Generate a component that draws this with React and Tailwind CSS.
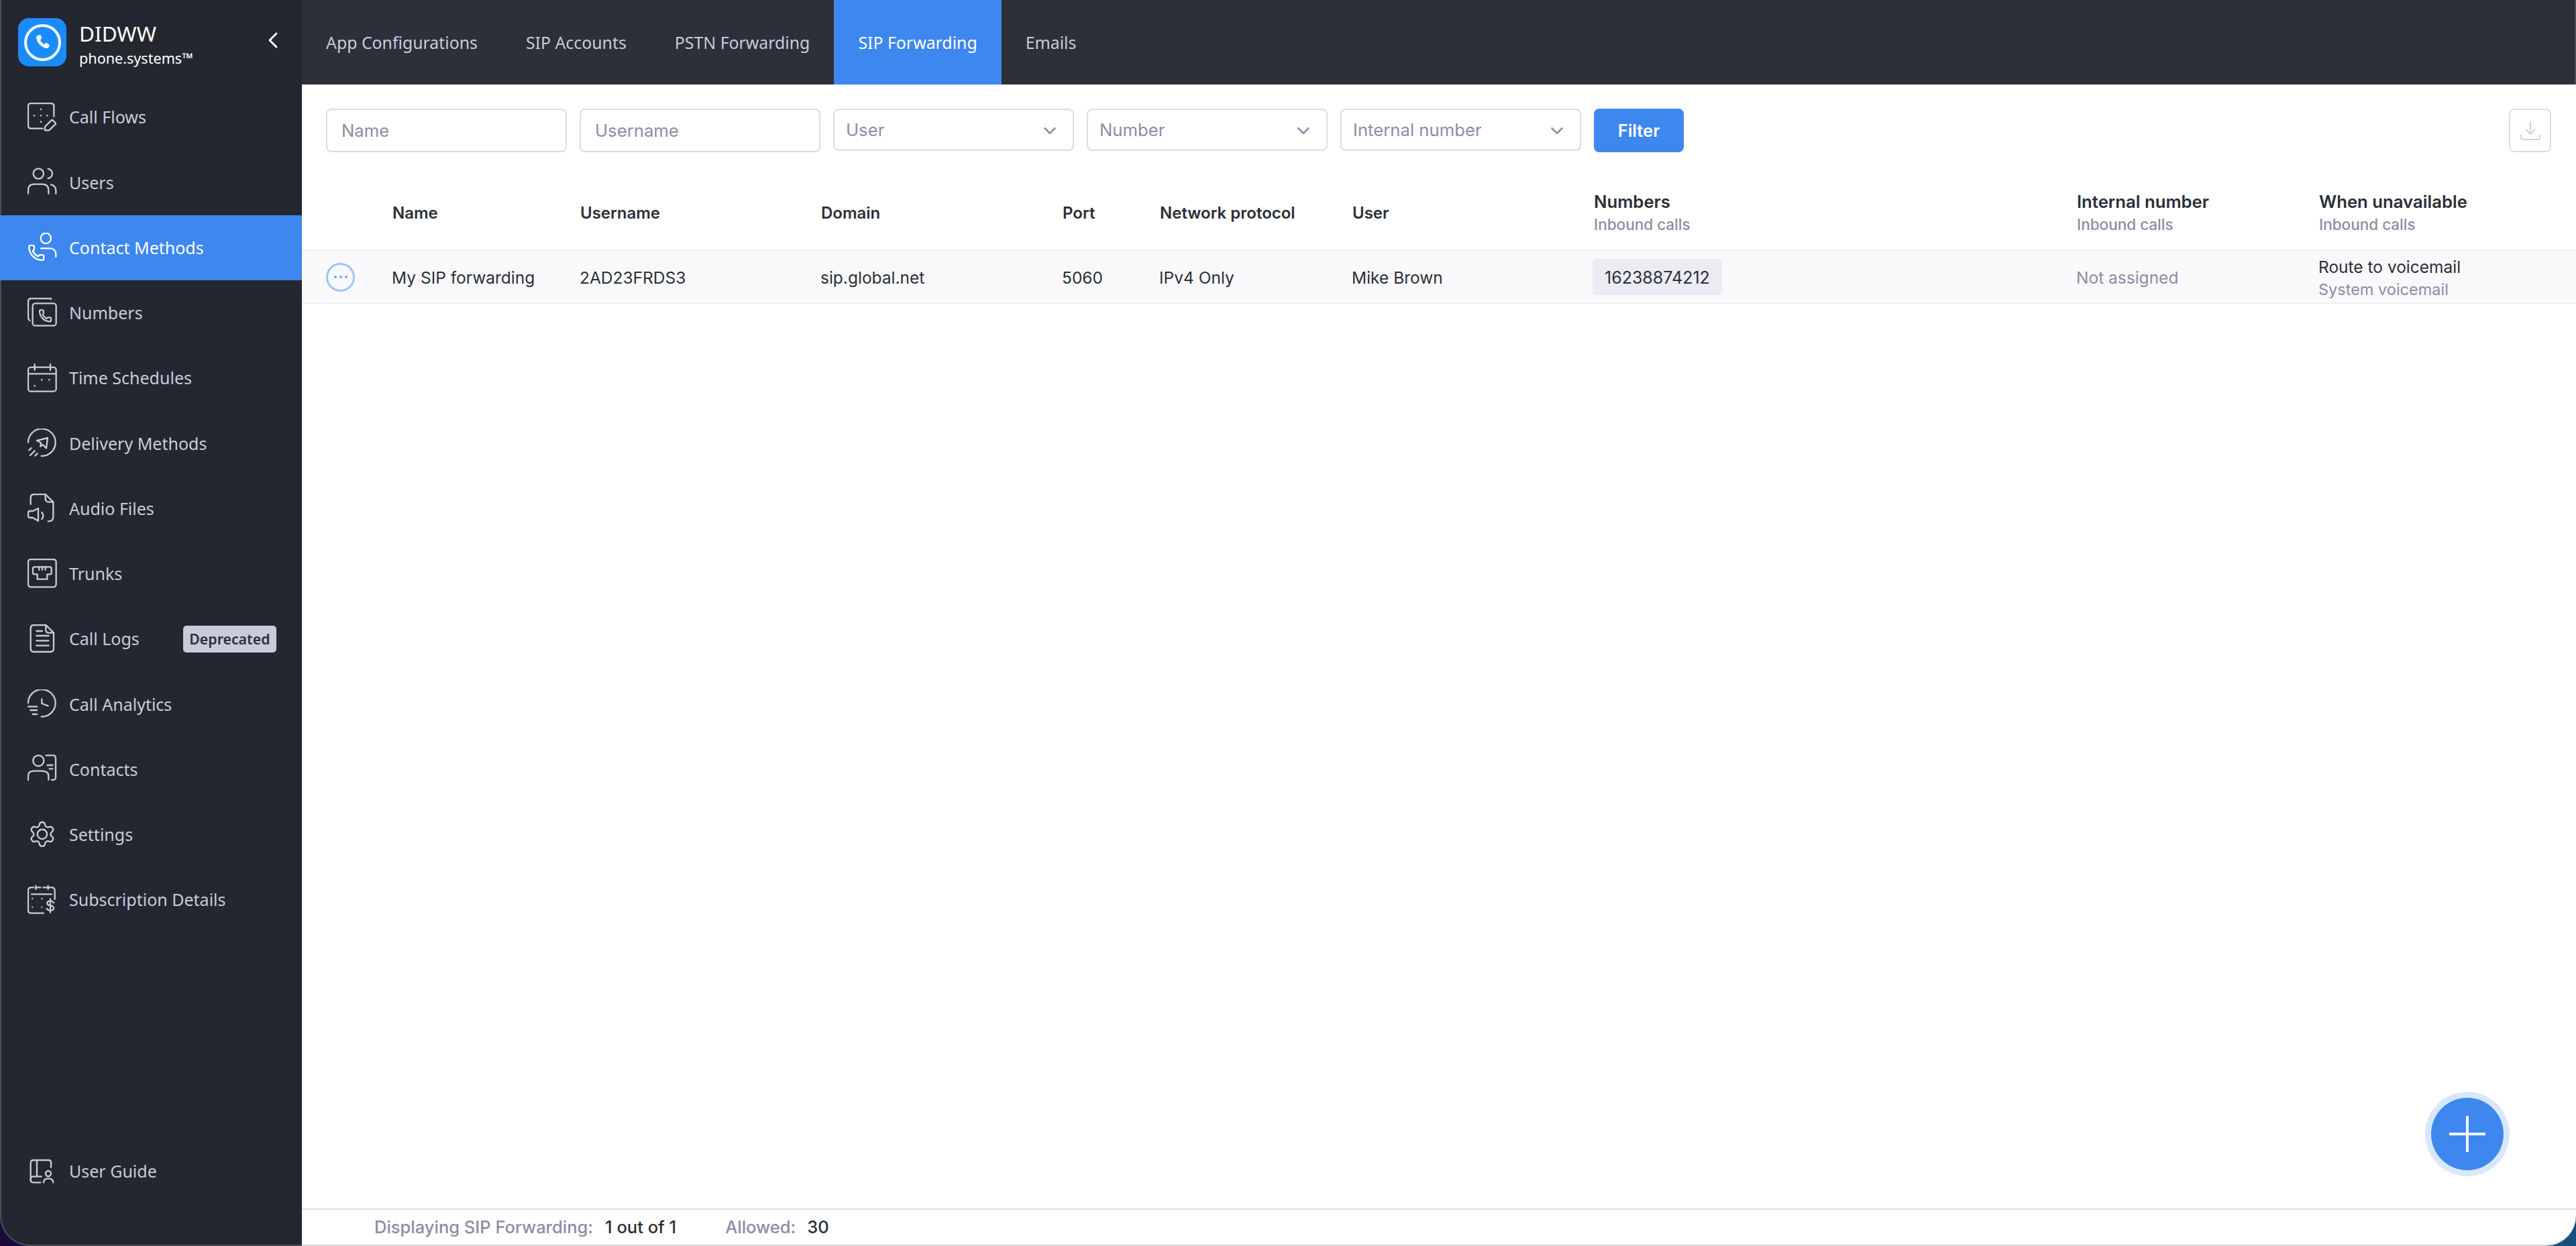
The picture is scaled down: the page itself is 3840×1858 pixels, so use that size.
import { ChevronDown, ChevronLeft } from 'lucide-react'

const phonePath =
  'M13.832 16.568a1 1 0 0 0 1.213-.303l.355-.465A2 2 0 0 1 17 15h3a2 2 0 0 1 2 2v3a2 2 0 0 1-2 2A18 18 0 0 1 2 4a2 2 0 0 1 2-2h3a2 2 0 0 1 2 2v3a2 2 0 0 1-.8 1.6l-.468.351a1 1 0 0 0-.292 1.233 14 14 0 0 0 6.392 6.384'
const gearPath =
  'M9.671 4.136a2.34 2.34 0 0 1 4.659 0 2.34 2.34 0 0 0 3.319 1.915 2.34 2.34 0 0 1 2.33 4.033 2.34 2.34 0 0 0 0 3.831 2.34 2.34 0 0 1-2.33 4.033 2.34 2.34 0 0 0-3.319 1.915 2.34 2.34 0 0 1-4.659 0 2.34 2.34 0 0 0-3.32-1.915 2.34 2.34 0 0 1-2.33-4.033 2.34 2.34 0 0 0 0-3.831A2.34 2.34 0 0 1 6.35 6.051a2.34 2.34 0 0 0 3.319-1.915'

function Glyph({ children }) {
  return (
    <svg
      viewBox="0 0 132 132"
      fill="none"
      stroke="currentColor"
      strokeWidth="7"
      strokeLinecap="round"
      strokeLinejoin="round"
      className="h-[44px] w-[44px] shrink-0"
    >
      {children}
    </svg>
  )
}

const icons = {
  flows: (
    <>
      <path d="M118 62V16Q118 3 104 3H16Q3 3 3 16V102Q3 116 16 116H68" />
      <path d="M60 30v.1M30 58v.1M60 58v.1M88 58v.1M60 86v.1" strokeWidth="8" />
      <path d="M78 108 106 80Q110 76 114 80L124 90Q128 94 124 98L96 124H78Z" />
    </>
  ),
  users: (
    <>
      <circle cx="49" cy="27" r="23" />
      <path d="M92 5A24 22 0 0 1 92 48" />
      <path d="M3 116V100Q3 74 30 74H66Q94 74 94 100V116" />
      <path d="M105 76Q127 80 127 102V116" />
    </>
  ),
  contact: (
    <>
      <circle cx="82" cy="25" r="23" />
      <path d="M60 70H100Q127 70 127 98V108" />
      <g transform="translate(0 50) scale(3.3)">
        <path d={phonePath} strokeWidth="2.1" />
      </g>
    </>
  ),
  numbers: (
    <>
      <path d="M106 5Q103 3 96 3H18Q3 3 3 18V86Q3 98 10 102" />
      <rect x="23" y="25" width="105" height="100" rx="12" />
      <g transform="translate(49 50) scale(2.55)">
        <path d={phonePath} strokeWidth="2.6" />
      </g>
    </>
  ),
  schedules: (
    <>
      <rect x="3" y="17" width="125" height="108" rx="12" />
      <path d="M3 46H128M32 3V30M102 3V30" />
      <path d="M64 73v.1M97 73v.1M32 100v.1" strokeWidth="8" />
    </>
  ),
  delivery: (
    <>
      <path d="M3 62A61 61 0 1 1 62 123" />
      <path d="M42 54 90 42 84 88 68 72 58 80 60 64Z" />
      <path d="M7 97 17 87M12 120 32 100M34 122 44 112" />
    </>
  ),
  audio: (
    <>
      <path d="M14 48V20Q14 3 32 3H80L115 38V104Q115 124 92 124" />
      <path d="M80 3V22Q80 38 96 38H115" />
      <path d="M3 86Q3 78 11 78H24L48 66V122L24 108H11Q3 108 3 100Z" />
      <path d="M64 84Q76 98 64 114" />
    </>
  ),
  trunks: (
    <>
      <rect x="3" y="3" width="125" height="124" rx="12" />
      <path d="M32 37H100Q107 37 107 44V62Q107 70 100 70H88V92H44V70H32Q24 70 24 62V44Q24 37 32 37Z" />
      <path d="M52 37V50M66 37V50M80 37V50" />
    </>
  ),
  logs: (
    <>
      <path d="M82 3H28Q14 3 14 18V108Q14 123 28 123H103Q117 123 117 108V38Z" />
      <path d="M82 3V24Q82 38 96 38H117" />
      <path d="M40 30H66M40 51H95M40 73H95M40 95H95" />
    </>
  ),
  analytics: (
    <>
      <path d="M3 61A61 61 0 1 1 62 122" />
      <path d="M64 43V63L92 74" />
      <path d="M3 77H42M13 93H42M23 111H42" />
    </>
  ),
  contacts: (
    <>
      <circle cx="49" cy="28" r="24" />
      <path d="M3 114V96Q3 74 30 74H62Q94 74 94 96V114" />
      <path d="M82 4H114Q126 4 126 16V102Q126 114 114 114H108" />
      <path d="M88 48H112M98 64H112" />
    </>
  ),
  settings: (
    <g transform="translate(1 1) scale(5.4)">
      <path d={gearPath} strokeWidth="1.3" />
      <circle cx="12" cy="12" r="4" strokeWidth="1.3" />
    </g>
  ),
  subscription: (
    <>
      <path d="M28 10H16Q3 10 3 24V112Q3 125 16 125H72" />
      <path d="M96 10H108Q122 10 122 24V62" />
      <path d="M18 40H108M37 2V18M37 10H58M92 2V18M70 10H92" />
      <path d="M22 60v.1M64 60v.1M22 98v.1M64 98v.1" strokeWidth="7" />
      <path d="M117 78Q110 69 101 70Q88 72 88 81Q88 89 102 91Q117 93 117 103Q117 113 102 113Q92 113 86 105M102 62V122" strokeWidth="7" />
    </>
  ),
  guide: (
    <>
      <path d="M105 50V28Q105 18 95 18H27Q14 18 14 30V106Q14 118 27 118H58" />
      <path d="M42 18V91M14 104Q14 91 27 91H62" />
      <circle cx="93" cy="78" r="12" />
      <path d="M72 118Q72 100 93 100Q115 100 115 118" />
    </>
  ),
}

const nav = [
  ['Call Flows', 'flows'],
  ['Users', 'users'],
  ['Contact Methods', 'contact', true],
  ['Numbers', 'numbers'],
  ['Time Schedules', 'schedules'],
  ['Delivery Methods', 'delivery'],
  ['Audio Files', 'audio'],
  ['Trunks', 'trunks'],
  ['Call Logs', 'logs'],
  ['Call Analytics', 'analytics'],
  ['Contacts', 'contacts'],
  ['Settings', 'settings'],
  ['Subscription Details', 'subscription'],
]

const tabs = ['App Configurations', 'SIP Accounts', 'PSTN Forwarding', 'SIP Forwarding', 'Emails']

function NavItem({ label, icon, active }) {
  return (
    <a
      className={`flex h-[97.25px] items-center gap-[18px] pr-[38px] text-[25px] ${
        active ? '-ml-[2px] bg-[#3d87ef] pl-[41px] text-white' : 'pl-[39px] text-[#c9cbdc]'
      }`}
    >
      <Glyph>{icons[icon]}</Glyph>
      <span className="pt-[1px]">{label}</span>
      {label === 'Call Logs' && (
        <span className="ml-auto flex h-[40px] items-center rounded-[5px] bg-[#c9cbdc] px-[9.5px] text-[21.3px] font-semibold text-[#2b2f38]">
          Deprecated
        </span>
      )}
    </a>
  )
}

function Sidebar() {
  return (
    <aside className="flex w-[450px] shrink-0 flex-col rounded-bl-[45px] border-b-2 border-l-2 border-[#4b4e57] bg-[#24272f] font-['Noto_Sans',sans-serif]">
      <div className="flex h-[126px] items-center pl-[25px]">
        <div className="grid h-[72px] w-[72px] place-items-center rounded-[16px] bg-[#1a8cfa]">
          <div className="grid h-[55px] w-[55px] place-items-center rounded-full border-[4px] border-white">
            <svg viewBox="0 0 24 24" className="h-[28px] w-[28px] fill-white">
              <path d="M6.6 3.2 8.8 2.6c.6-.1 1.100.2 1.300.7l1.200 3.200c.2.500 0 1-.4 1.300L9.300 9c.9 2.200 2.800 4.300 5.400 5.700l1.500-1.500c.4-.4 1-.5 1.400-.2l3 1.700c.5.3.7.9.5 1.400l-.9 2.400c-.3.800-1 1.300-1.900 1.200C10.900 18.900 4.600 12.400 4.500 5.500c0-1.100.9-2 2.100-2.300Z" />
            </svg>
          </div>
        </div>
        <div className="ml-[19px] pt-[5px] text-white">
          <div className="text-[31.5px] leading-[40px]">DIDWW</div>
          <div className="mt-[2px] text-[21.6px] leading-[30px]">phone.systems™</div>
        </div>
        <ChevronLeft className="mr-[23px] ml-auto h-[40px] w-[40px] -translate-y-[3px] text-white" strokeWidth={1.75} />
      </div>
      <nav className="flex flex-1 flex-col">
        {nav.map(([label, icon, active]) => (
          <NavItem key={label} label={label} icon={icon} active={active} />
        ))}
        <div className="mt-auto mb-[61px]">
          <NavItem label="User Guide" icon="guide" />
        </div>
      </nav>
    </aside>
  )
}

function TextFilter({ label }) {
  return (
    <div className="flex h-[65px] w-[359px] items-center rounded-[8px] border-2 border-[#dcdce9] px-[21px] pt-[1px] text-[25.7px] text-[#8b8da5]">
      {label}
    </div>
  )
}

function SelectFilter({ label }) {
  return (
    <div className="flex h-[63px] w-[359px] items-center justify-between rounded-[8px] border-2 border-[#dcdce9] pt-[2px] pr-[19px] pl-[17px] text-[25.7px] text-[#8b8da5]">
      {label}
      <ChevronDown className="h-[30px] w-[30px]" strokeWidth={2} />
    </div>
  )
}

const columns = 'grid grid-cols-[99px_280px_359px_360px_145px_287px_360px_720px_361px_1fr]'

function HeaderCell({ title, sub }) {
  return (
    <div className={sub ? 'pb-[3px]' : ''}>
      <div className={`leading-[34px] font-semibold text-[#2b2f38] ${sub ? 'text-[25.7px]' : 'text-[24px]'}`}>{title}</div>
      {sub && <div className="mt-[4px] text-[22.5px] leading-[26px] font-medium text-[#8b8da5]">{sub}</div>}
    </div>
  )
}

function App() {
  return (
    <div className="h-[1858px] w-[3840px] overflow-hidden bg-linear-to-r from-[#1a0a3a] to-[#14507f]">
      <div className="flex h-full">
        <Sidebar />
        <main className="relative flex min-w-0 flex-1 flex-col overflow-hidden rounded-br-[45px] border-b-2 border-[#d8d8de] bg-white font-['Inter',sans-serif]">
          <div className="flex h-[126px] shrink-0 border-r-2 border-[#4b4e57] bg-[#2c3039] pt-[1px] font-['Noto_Sans',sans-serif] text-[24.85px] text-[#c9cbdc]">
            {tabs.map((tab) => (
              <a
                key={tab}
                className={`flex items-center px-[36px] ${tab === 'SIP Forwarding' ? '-mt-[1px] bg-[#3d87ef] pt-[1px] text-white' : ''}`}
              >
                {tab}
              </a>
            ))}
          </div>

          <div className="flex items-start gap-[19px] pt-[36px] pr-[37px] pl-[36px]">
            <TextFilter label="Name" />
            <TextFilter label="Username" />
            <SelectFilter label="User" />
            <SelectFilter label="Number" />
            <SelectFilter label="Internal number" />
            <button className="h-[65px] w-[134px] rounded-[8px] bg-[#3d87ef] pt-[1px] text-[25.5px] font-semibold text-white">
              Filter
            </button>
            <button className="ml-auto grid h-[65px] w-[63px] place-items-center rounded-[8px] border-2 border-[#dcdce9] text-[#cfd1e2]">
              <svg viewBox="0 0 30 30" fill="none" stroke="currentColor" strokeWidth="2" className="h-[30px] w-[30px]">
                <path d="M15 1V20M8 13 15 20 22 13" />
                <path d="M1 21V25Q1 28 4 28H26Q29 28 29 25V21" />
              </svg>
            </button>
          </div>

          <div className={`${columns} mt-[36px] h-[111px] items-center border-b-2 border-[#ebebf3] pl-[36px]`}>
            <span />
            <HeaderCell title="Name" />
            <HeaderCell title="Username" />
            <HeaderCell title="Domain" />
            <HeaderCell title="Port" />
            <HeaderCell title="Network protocol" />
            <HeaderCell title="User" />
            <HeaderCell title="Numbers" sub="Inbound calls" />
            <HeaderCell title="Internal number" sub="Inbound calls" />
            <HeaderCell title="When unavailable" sub="Inbound calls" />
          </div>

          <div className={`${columns} h-[79px] items-center border-b border-[#e6e6ee] bg-[#f9f9fb] pl-[35px] text-[24.5px] text-[#2b2f38]`}>
            <span className="ml-[1px] grid h-[43px] w-[43px] place-items-center rounded-full border-[3px] border-[#9cc4f8]">
              <span className="flex gap-[4px]">
                <i className="h-[4px] w-[4px] rounded-full bg-[#6fa8f5]" />
                <i className="h-[4px] w-[4px] rounded-full bg-[#6fa8f5]" />
                <i className="h-[4px] w-[4px] rounded-full bg-[#6fa8f5]" />
              </span>
            </span>
            <span className="pt-[3px]">My SIP forwarding</span>
            <span className="pt-[3px]">2AD23FRDS3</span>
            <span className="pt-[3px]">sip.global.net</span>
            <span className="pt-[3px]">5060</span>
            <span className="pt-[3px]">IPv4 Only</span>
            <span className="pt-[3px]">Mike Brown</span>
            <span>
              <span className="-ml-[1px] inline-flex h-[54px] items-center rounded-[6px] bg-[#ebebf3] px-[18px] pt-[3px] text-[25px]">16238874212</span>
            </span>
            <span className="pt-[3px] text-[#8b8da5]">Not assigned</span>
            <span className="pt-[3px]">
              <div className="leading-[34px]">Route to voicemail</div>
              <div className="text-[23.5px] leading-[34px] text-[#8b8da5]">System voicemail</div>
            </span>
          </div>

          <div className="mt-auto flex h-[54px] items-center border-t-2 border-[#dcdce9] pl-[108px] text-[25.5px]">
            <span className="font-medium text-[#8b8da5]">Displaying SIP Forwarding:</span>
            <span className="ml-[18px] font-medium text-[#2b2f38]">1 out of 1</span>
            <span className="ml-[73px] font-medium text-[#8b8da5]">Allowed:</span>
            <span className="ml-[17px] font-medium text-[#2b2f38]">30</span>
          </div>

          <button className="absolute right-[108px] bottom-[111px] grid h-[108px] w-[108px] place-items-center rounded-full bg-[#3d87ef] ring-[9px] ring-[#d9e7fc]">
            <svg viewBox="0 0 54 54" fill="none" stroke="white" strokeWidth="4" className="h-[54px] w-[54px]">
              <path d="M27 0V54M0 27H54" />
            </svg>
          </button>
        </main>
      </div>
    </div>
  )
}

export default App
